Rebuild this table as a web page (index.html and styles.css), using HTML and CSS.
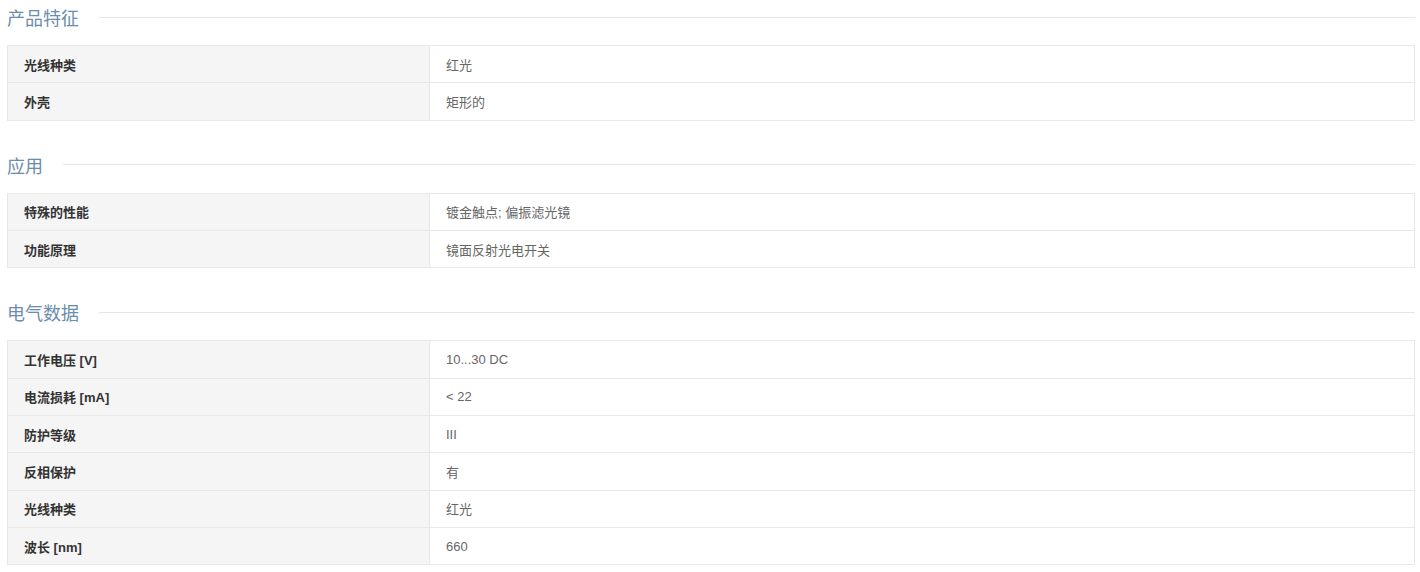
FILE: index.html
```html
<!DOCTYPE html>
<html lang="zh-CN">
<head>
    <meta charset="UTF-8">
    <title>产品参数</title>
    <link rel="stylesheet" href="styles.css">
</head>
<body>
    <div class="specs">
        <div class="section">
            <h2 class="section-title"><span>产品特征</span></h2>
            <div class="spec-table">
                <div class="spec-row"><div class="spec-label">光线种类</div><div class="spec-value">红光</div></div>
                <div class="spec-row"><div class="spec-label">外壳</div><div class="spec-value">矩形的</div></div>
            </div>
        </div>

        <div class="section">
            <h2 class="section-title"><span>应用</span></h2>
            <div class="spec-table">
                <div class="spec-row"><div class="spec-label">特殊的性能</div><div class="spec-value">镀金触点; 偏振滤光镜</div></div>
                <div class="spec-row"><div class="spec-label">功能原理</div><div class="spec-value">镜面反射光电开关</div></div>
            </div>
        </div>

        <div class="section">
            <h2 class="section-title"><span>电气数据</span></h2>
            <div class="spec-table">
                <div class="spec-row"><div class="spec-label">工作电压 [V]</div><div class="spec-value">10...30 DC</div></div>
                <div class="spec-row"><div class="spec-label">电流损耗 [mA]</div><div class="spec-value">&lt; 22</div></div>
                <div class="spec-row"><div class="spec-label">防护等级</div><div class="spec-value">III</div></div>
                <div class="spec-row"><div class="spec-label">反相保护</div><div class="spec-value">有</div></div>
                <div class="spec-row"><div class="spec-label">光线种类</div><div class="spec-value">红光</div></div>
                <div class="spec-row"><div class="spec-label">波长 [nm]</div><div class="spec-value">660</div></div>
            </div>
        </div>
    </div>
</body>
</html>
```

FILE: styles.css
```css
body {
    margin: 0;
    background: #fff;
    font-family: "Liberation Sans", "Noto Sans CJK SC", sans-serif;
}
.specs {
    width: 1408px;
    padding-left: 7px;
}
.section {
    margin-bottom: 27px;
}
.section-title {
    display: flex;
    align-items: center;
    gap: 20px;
    height: 34px;
    margin: 0 0 11px 0;
    font-size: 18px;
    font-weight: normal;
    color: #6b8cab;
}
.section-title::after {
    content: "";
    flex: 1;
    border-top: 1px solid #e6e6e6;
}
.spec-table {
    border: 1px solid #e8e8e8;
    border-bottom: none;
    font-size: 13px;
}
.spec-row {
    display: flex;
    box-sizing: border-box;
    height: 37.33px;
    border-bottom: 1px solid #e8e8e8;
}
.spec-label,
.spec-value {
    display: flex;
    align-items: center;
    padding-left: 16px;
}
.spec-label {
    box-sizing: border-box;
    width: 422px;
    border-right: 1px solid #e8e8e8;
    background: #f5f5f5;
    color: #333;
    font-weight: bold;
}
.spec-value {
    flex: 1;
    color: #666;
}
```
